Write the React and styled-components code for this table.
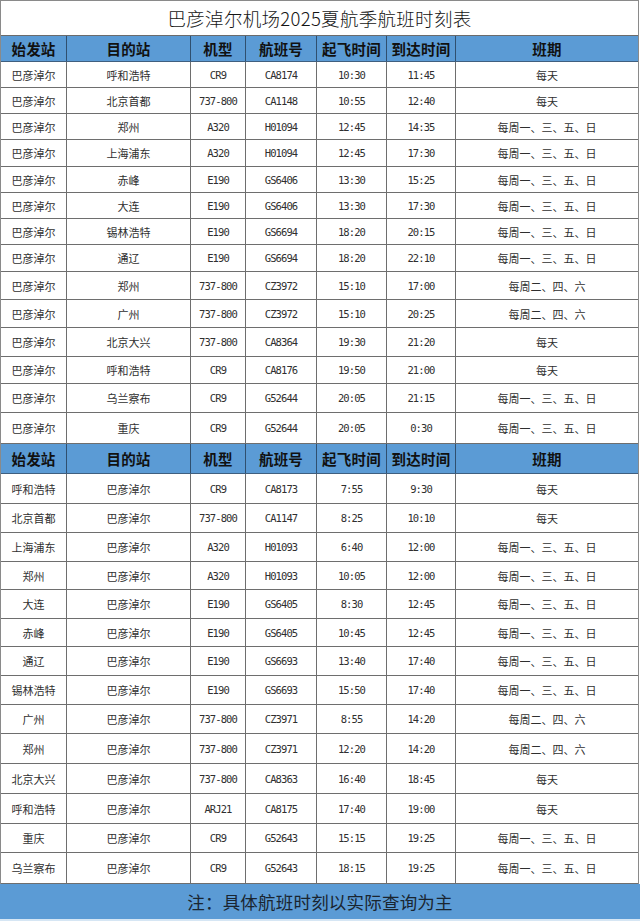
import React from 'react'
import styled, { createGlobalStyle } from 'styled-components'

const GlobalStyle = createGlobalStyle`
  html, body {
    margin: 0;
    padding: 0;
    background: #ffffff;
  }
  body {
    font-family: "Noto Sans CJK SC", "Noto Sans", sans-serif;
  }
`

const COLS = '66px 124px 55px 71px 70px 69px 1fr'

const outbound = [
  ['巴彦淖尔', '呼和浩特', 'CR9', 'CA8174', '10:30', '11:45', '每天'],
  ['巴彦淖尔', '北京首都', '737-800', 'CA1148', '10:55', '12:40', '每天'],
  ['巴彦淖尔', '郑州', 'A320', 'H01094', '12:45', '14:35', '每周一、三、五、日'],
  ['巴彦淖尔', '上海浦东', 'A320', 'H01094', '12:45', '17:30', '每周一、三、五、日'],
  ['巴彦淖尔', '赤峰', 'E190', 'GS6406', '13:30', '15:25', '每周一、三、五、日'],
  ['巴彦淖尔', '大连', 'E190', 'GS6406', '13:30', '17:30', '每周一、三、五、日'],
  ['巴彦淖尔', '锡林浩特', 'E190', 'GS6694', '18:20', '20:15', '每周一、三、五、日'],
  ['巴彦淖尔', '通辽', 'E190', 'GS6694', '18:20', '22:10', '每周一、三、五、日'],
  ['巴彦淖尔', '郑州', '737-800', 'CZ3972', '15:10', '17:00', '每周二、四、六'],
  ['巴彦淖尔', '广州', '737-800', 'CZ3972', '15:10', '20:25', '每周二、四、六'],
  ['巴彦淖尔', '北京大兴', '737-800', 'CA8364', '19:30', '21:20', '每天'],
  ['巴彦淖尔', '呼和浩特', 'CR9', 'CA8176', '19:50', '21:00', '每天'],
  ['巴彦淖尔', '乌兰察布', 'CR9', 'G52644', '20:05', '21:15', '每周一、三、五、日'],
  ['巴彦淖尔', '重庆', 'CR9', 'G52644', '20:05', '0:30', '每周一、三、五、日'],
]
const outboundHeights = [26, 26, 26, 27, 26, 26, 26, 27, 28, 28, 29, 27, 29, 31]

const inbound = [
  ['呼和浩特', '巴彦淖尔', 'CR9', 'CA8173', '7:55', '9:30', '每天'],
  ['北京首都', '巴彦淖尔', '737-800', 'CA1147', '8:25', '10:10', '每天'],
  ['上海浦东', '巴彦淖尔', 'A320', 'H01093', '6:40', '12:00', '每周一、三、五、日'],
  ['郑州', '巴彦淖尔', 'A320', 'H01093', '10:05', '12:00', '每周一、三、五、日'],
  ['大连', '巴彦淖尔', 'E190', 'GS6405', '8:30', '12:45', '每周一、三、五、日'],
  ['赤峰', '巴彦淖尔', 'E190', 'GS6405', '10:45', '12:45', '每周一、三、五、日'],
  ['通辽', '巴彦淖尔', 'E190', 'GS6693', '13:40', '17:40', '每周一、三、五、日'],
  ['锡林浩特', '巴彦淖尔', 'E190', 'GS6693', '15:50', '17:40', '每周一、三、五、日'],
  ['广州', '巴彦淖尔', '737-800', 'CZ3971', '8:55', '14:20', '每周二、四、六'],
  ['郑州', '巴彦淖尔', '737-800', 'CZ3971', '12:20', '14:20', '每周二、四、六'],
  ['北京大兴', '巴彦淖尔', '737-800', 'CA8363', '16:40', '18:45', '每天'],
  ['呼和浩特', '巴彦淖尔', 'ARJ21', 'CA8175', '17:40', '19:00', '每天'],
  ['重庆', '巴彦淖尔', 'CR9', 'G52643', '15:15', '19:25', '每周一、三、五、日'],
  ['乌兰察布', '巴彦淖尔', 'CR9', 'G52643', '18:15', '19:25', '每周一、三、五、日'],
]
const inboundHeights = [30, 29, 29, 28, 29, 28, 29, 29, 29, 30, 30, 30, 29, 31]

const headers = ['始发站', '目的站', '机型', '航班号', '起飞时间', '到达时间', '班期']

// columns holding latin codes / times use a monospaced face
const MONO_COLS = [2, 3, 4, 5]

const Page = styled.div`
  width: 640px;
  height: 921px;
  box-sizing: border-box;
  display: flex;
  flex-direction: column;
  background: #ffffff;
`

const Sheet = styled.div`
  width: 639px;
  display: flex;
  flex-direction: column;
  border-left: 1px solid #8a8a8a;
  border-right: 1px solid #8a8a8a;
  border-top: 1px solid #8a8a8a;
  box-sizing: border-box;
`

const Title = styled.div`
  height: 34px;
  display: flex;
  align-items: center;
  justify-content: center;
  border-bottom: 1px solid #6b6b6b;
  font-size: 18.5px;
  font-weight: 300;
  color: #141414;
  letter-spacing: 0.3px;
`

const Row = styled.div`
  display: grid;
  grid-template-columns: ${COLS};
  height: ${({ $h }) => $h}px;
  box-sizing: border-box;
  border-bottom: 1px solid ${({ $head }) => ($head ? '#3f5f7f' : '#6e6e6e')};
  background: ${({ $head }) => ($head ? '#5b9bd5' : '#ffffff')};
`

const Cell = styled.div`
  display: flex;
  align-items: center;
  justify-content: center;
  border-right: 1px solid #6e6e6e;
  white-space: nowrap;
  overflow: hidden;
  color: #2f2f2f;
  font-size: 11px;
  &:last-child {
    border-right: none;
  }
  ${({ $mono }) => $mono && `
    font-family: "DejaVu Sans Mono", "Liberation Mono", monospace;
    font-size: 10.5px;
    letter-spacing: -0.9px;
  `}
`

const HeadCell = styled(Cell)`
  font-size: 14.5px;
  font-weight: 700;
  color: #111111;
  letter-spacing: 0.2px;
  border-right-color: #2f4f6f;
`

const Footer = styled.div`
  height: 36px;
  display: flex;
  align-items: center;
  justify-content: center;
  background: #5b9bd5;
  font-size: 17.5px;
  font-weight: 400;
  color: #1a2530;
  letter-spacing: 0.2px;
  border-bottom: 2px solid #d6e6f4;
`

const HeaderRow = ({ h }) => (
  <Row $head $h={h}>
    {headers.map((t) => (
      <HeadCell key={t}>{t}</HeadCell>
    ))}
  </Row>
)

const Section = ({ rows, heights, headH }) => (
  <>
    <HeaderRow h={headH} />
    {rows.map((r, i) => (
      <Row key={i} $h={heights[i]}>
        {r.map((v, j) => (
          <Cell key={j} $mono={MONO_COLS.includes(j)}>{v}</Cell>
        ))}
      </Row>
    ))}
  </>
)

export default function App() {
  return (
    <Page>
      <GlobalStyle />
      <Sheet>
        <Title>巴彦淖尔机场2025夏航季航班时刻表</Title>
        <Section rows={outbound} heights={outboundHeights} headH={26} />
        <Section rows={inbound} heights={inboundHeights} headH={30} />
      </Sheet>
      <Footer>注：具体航班时刻以实际查询为主</Footer>
    </Page>
  )
}
